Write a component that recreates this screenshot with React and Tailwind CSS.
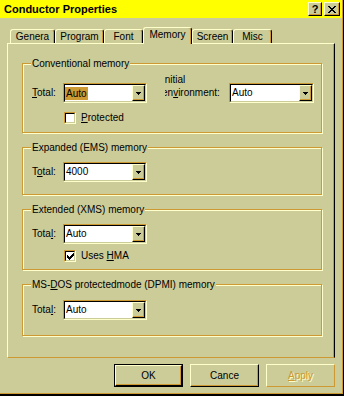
import React from "react";

function Px({ rows, color = "#000" }) {
  const rects = [];
  rows.forEach((r, y) => {
    [...r].forEach((c, x) => {
      if (c === "X") rects.push(<rect key={`${x}-${y}`} x={x} y={y} width="1" height="1" fill={color} />);
    });
  });
  return (
    <svg width={rows[0].length} height={rows.length} shapeRendering="crispEdges" className="block">
      {rects}
    </svg>
  );
}

const ARROW = ["XXXXX", ".XXX.", "..X.."];
const CLOSE = ["XX....XX", ".XX..XX.", "..XXXX..", "...XX...", "..XXXX..", ".XX..XX.", "XX....XX"];
const CHECK = ["......X", ".....XX", "X...XXX", "XX.XXX.", "XXXXX..", ".XXX...", "..X...."];

function Combo({ value, width, highlight }) {
  return (
    <div className={`${width} flex h-[20px] shrink-0 border border-t-[#cc9933] border-l-[#cc9933] border-b-[#ffffcc] border-r-[#ffffcc]`}>
      <div className="flex flex-1 border border-t-black border-l-black border-b-[#cccc99] border-r-[#cccc99] bg-white">
        <div className="flex flex-1 items-center">
          {highlight ? (
            <span className="bg-[#cc9933] px-px leading-[13px]">{value}</span>
          ) : (
            <span className="px-px leading-[12px]">{value}</span>
          )}
        </div>
        <div className="flex w-[13px] items-center justify-center border border-t-[#ffffcc] border-l-[#ffffcc] border-b-black border-r-black bg-[#cccc99] shadow-[inset_-1px_-1px_0_#cc9933]">
          <Px rows={ARROW} />
        </div>
      </div>
    </div>
  );
}

function Check({ checked }) {
  return (
    <div className="h-[12px] w-[12px] shrink-0 border border-t-[#cc9933] border-l-[#cc9933] border-b-[#ffffcc] border-r-[#ffffcc]">
      <div className="flex h-full w-full items-center justify-center border border-t-black border-l-black border-b-[#cccc99] border-r-[#cccc99] bg-white">
        {checked && <Px rows={CHECK} />}
      </div>
    </div>
  );
}

function GroupTitle({ children }) {
  return <span className="absolute left-[8px] top-[-6px] bg-[#cccc99] px-px leading-[12px] whitespace-nowrap">{children}</span>;
}

const tabs = [
  ["Genera", "w-[45px]", false],
  ["Program", "w-[49px]", false],
  ["Font", "w-[39px]", false],
  ["Memory", "w-[49px]", true],
  ["Screen", "w-[41px]", false],
  ["Misc", "w-[39px]", false],
];

export default function App() {
  return (
    <div className="flex h-[396px] w-[344px] flex-col overflow-hidden bg-[#cccc99] pr-[2px] pb-[3px] font-['Liberation_Sans',Arial,sans-serif] text-[10px] leading-[12px] text-black shadow-[inset_-1px_-2px_0_#000,inset_-2px_-3px_0_#cc9933]">
      {/* Title bar */}
      <div className="flex h-[18px] shrink-0 items-center justify-between bg-[#ffff00] pl-[4px] pr-[2px]">
        <span className="text-[11px] font-bold leading-[13px]">Conductor Properties</span>
        <div className="flex gap-[2px]">
          <div className="flex h-[14px] w-[14px] items-center justify-center border border-t-[#ffffcc] border-l-[#ffffcc] border-b-black border-r-black bg-[#cccc99] text-[11px] font-bold leading-none shadow-[inset_-1px_-1px_0_#cc9933]">
            ?
          </div>
          <div className="flex h-[14px] w-[16px] items-center justify-center border border-t-[#ffffcc] border-l-[#ffffcc] border-b-black border-r-black bg-[#cccc99] shadow-[inset_-1px_-1px_0_#cc9933]">
            <Px rows={CLOSE} />
          </div>
        </div>
      </div>

      {/* Tabs */}
      <div className="relative z-10 mt-[9px] flex h-[16px] shrink-0 items-end pl-[10px]">
        {tabs.map(([label, w, sel]) => (
          <div
            key={label}
            className={`${w} flex items-center justify-center rounded-t-[3px] border-l border-t border-r border-l-[#ffffcc] border-t-[#ffffcc] border-r-black bg-[#cccc99] shadow-[inset_-1px_0_0_#cc9933] ${
              sel ? "-mb-px h-[17px] pb-[3px]" : "h-[14px]"
            }`}
          >
            {label}
          </div>
        ))}
      </div>

      {/* Panel */}
      <div className="ml-[7px] flex h-[315px] w-[328px] shrink-0 flex-col gap-[14px] border border-l-[#ffffcc] border-t-[#ffffcc] border-r-black border-b-[#cc9933] pl-[14px] pt-[19px] shadow-[inset_-1px_0_0_#cc9933]">
        {/* Conventional */}
        <div className="relative h-[70px] w-[300px] shrink-0 border border-[#cc9933] pl-[9px] pt-[19px] shadow-[inset_1px_1px_0_#ffffcc,1px_1px_0_#ffffcc]">
          <GroupTitle>Conventional memory</GroupTitle>
          <div className="flex h-[20px] items-center">
            <span className="w-[31px] shrink-0">
              <u>T</u>otal:
            </span>
            <Combo value="Auto" width="w-[84px]" highlight />
            <div className="mb-[4px] ml-[18px] w-[64px] shrink-0 self-end overflow-hidden">
              <div className="-ml-[3px] whitespace-nowrap leading-[12.5px]">
                <div>Initial</div>
                <div>
                  en<u>v</u>ironment:
                </div>
              </div>
            </div>
            <Combo value="Auto" width="w-[85px]" />
          </div>
          <div className="mt-[9px] flex items-center pl-[32px]">
            <Check />
            <span className="ml-[5px]">
              <u>P</u>rotected
            </span>
          </div>
        </div>

        {/* EMS */}
        <div className="relative h-[48px] w-[300px] shrink-0 border border-[#cc9933] pl-[9px] pt-[14px] shadow-[inset_1px_1px_0_#ffffcc,1px_1px_0_#ffffcc]">
          <GroupTitle>Expanded (EMS) memory</GroupTitle>
          <div className="flex h-[20px] items-center">
            <span className="w-[31px] shrink-0">
              T<u>o</u>tal:
            </span>
            <Combo value="4000" width="w-[84px]" />
          </div>
        </div>

        {/* XMS */}
        <div className="relative h-[61px] w-[300px] shrink-0 border border-[#cc9933] pl-[9px] pt-[14px] shadow-[inset_1px_1px_0_#ffffcc,1px_1px_0_#ffffcc]">
          <GroupTitle>Extended (XMS) memory</GroupTitle>
          <div className="flex h-[20px] items-center">
            <span className="w-[31px] shrink-0">
              Tota<u>l</u>:
            </span>
            <Combo value="Auto" width="w-[84px]" />
          </div>
          <div className="mt-[6px] flex items-center pl-[32px]">
            <Check checked />
            <span className="ml-[5px]">
              Uses <u>H</u>MA
            </span>
          </div>
        </div>

        {/* DPMI */}
        <div className="relative h-[52px] w-[300px] shrink-0 border border-[#cc9933] pl-[9px] pt-[15px] shadow-[inset_1px_1px_0_#ffffcc,1px_1px_0_#ffffcc]">
          <GroupTitle>
            MS-<u>D</u>OS protectedmode (DPMI) memory
          </GroupTitle>
          <div className="flex h-[20px] items-center">
            <span className="w-[31px] shrink-0">
              Tota<u>l</u>:
            </span>
            <Combo value="Auto" width="w-[84px]" />
          </div>
        </div>
      </div>

      {/* Buttons */}
      <div className="mt-[6px] flex shrink-0 justify-end gap-[7px] pr-[7px]">
        <div className="h-[23px] w-[69px] border border-black">
          <div className="flex h-full w-full items-center justify-center border border-t-[#ffffcc] border-l-[#ffffcc] border-b-black border-r-black shadow-[inset_-1px_-1px_0_#cc9933]">
            OK
          </div>
        </div>
        <div className="flex h-[23px] w-[69px] items-center justify-center border border-t-[#ffffcc] border-l-[#ffffcc] border-b-black border-r-black shadow-[inset_-1px_-1px_0_#cc9933]">
          Cance
        </div>
        <div className="flex h-[23px] w-[69px] items-center justify-center border border-t-[#ffffcc] border-l-[#ffffcc] border-b-[#cc9933] border-r-[#cc9933] text-[#cc9933] [text-shadow:1px_1px_0_#ffffcc]">
          <span>
            <u>A</u>pply
          </span>
        </div>
      </div>
    </div>
  );
}
